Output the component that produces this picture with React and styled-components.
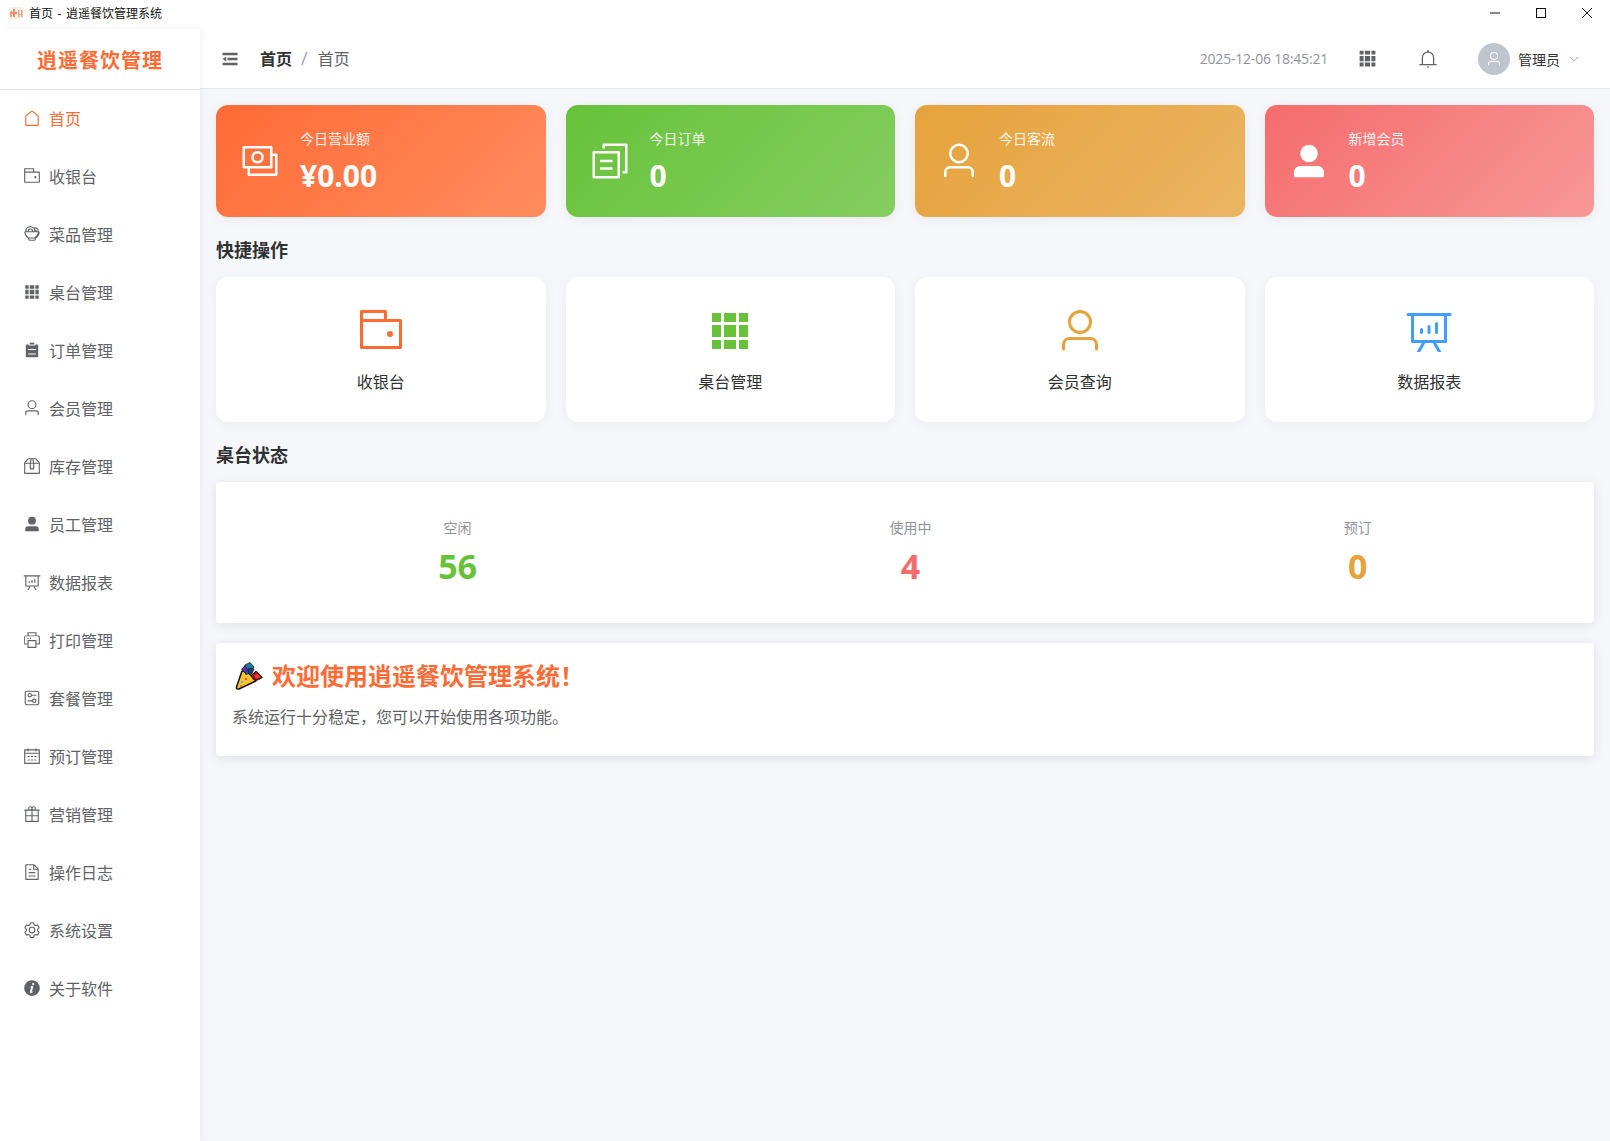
import React from "react";
import styled, { createGlobalStyle } from "styled-components";

const icons = {
  house:
    "M192 413.952V896h640V413.952L512 147.328zM139.52 374.4l352-293.312a32 32 0 0 1 40.96 0l352 293.312A32 32 0 0 1 896 398.976V928a32 32 0 0 1-32 32H160a32 32 0 0 1-32-32V398.976a32 32 0 0 1 11.52-24.576",
  wallet:
    "M640 288h-64V128H128v704h384v32a32 32 0 0 0 32 32H96a32 32 0 0 1-32-32V96a32 32 0 0 1 32-32h512a32 32 0 0 1 32 32z M128 320v512h768V320zm-32-64h832a32 32 0 0 1 32 32v576a32 32 0 0 1-32 32H96a32 32 0 0 1-32-32V288a32 32 0 0 1 32-32 M704 640a64 64 0 1 1 0-128 64 64 0 0 1 0 128",
  food:
    "M128 352.576V352a288 288 0 0 1 491.072-204.224 192 192 0 0 1 274.24 204.48 64 64 0 0 1 57.216 74.24C921.6 600.512 850.048 710.656 736 756.992V800a96 96 0 0 1-96 96H384a96 96 0 0 1-96-96v-43.008c-114.048-46.336-185.6-156.48-214.528-330.496A64 64 0 0 1 128 352.64zm64-.576h64a160 160 0 0 1 320 0h64a224 224 0 0 0-448 0m128 0h192a96 96 0 0 0-192 0m439.424 0h68.544A128.256 128.256 0 0 0 704 192c-15.36 0-29.952 2.688-43.456 7.616 11.328 18.176 20.672 37.76 27.84 58.304A64.128 64.128 0 0 1 759.424 352M672 768H352v32a32 32 0 0 0 32 32h256a32 32 0 0 0 32-32zm-32-64c111-38 179-133 206-288H138c27 155 95 250 206 288z",
  grid:
    "M640 384v256H384V384zm64 0h192v256H704zm-64 512H384V704h256zm64 0V704h192v192zm-64-768v192H384V128zm64 0h192v192H704zM320 384v256H128V384zm0 512H128V704h192zm0-768v192H128V128z",
  list: "M704 192h160v736H160V192h160v64h384zM288 512h448v-64H288zm0 256h448v-64H288zm96-576V96h256v96z",
  user:
    "M512 512a192 192 0 1 0 0-384 192 192 0 0 0 0 384m0 64a256 256 0 1 1 0-512 256 256 0 0 1 0 512m320 320v-96a96 96 0 0 0-96-96H288a96 96 0 0 0-96 96v96a32 32 0 1 1-64 0v-96a160 160 0 0 1 160-160h448a160 160 0 0 1 160 160v96a32 32 0 1 1-64 0",
  box:
    "M317.056 128 128 344.064V896h768V344.064L706.944 128zm-14.528-64h418.944a32 32 0 0 1 24.064 10.88l206.528 236.096A32 32 0 0 1 960 332.032V928a32 32 0 0 1-32 32H96a32 32 0 0 1-32-32V332.032a32 32 0 0 1 7.936-21.12L278.4 75.008A32 32 0 0 1 302.528 64z M64 320h896v64H64z M448 327.872V640h128V327.872L526.08 128h-28.16zM448 64h128l64 256v352a32 32 0 0 1-32 32H416a32 32 0 0 1-32-32V320z",
  userFilled:
    "M288 320a224 224 0 1 0 448 0 224 224 0 1 0-448 0m544 608H160a32 32 0 0 1-32-32v-96a160 160 0 0 1 160-160h448a160 160 0 0 1 160 160v96a32 32 0 0 1-32 32z",
  chart:
    "m665.216 768 110.848 192h-73.856L591.36 768H433.024L322.176 960H248.32l110.848-192H160a32 32 0 0 1-32-32V192H64a32 32 0 0 1 0-64h896a32 32 0 1 1 0 64h-64v544a32 32 0 0 1-32 32zM832 192H192v512h640zM352 448a32 32 0 0 1 32 32v64a32 32 0 0 1-64 0v-64a32 32 0 0 1 32-32m160-64a32 32 0 0 1 32 32v128a32 32 0 0 1-64 0V416a32 32 0 0 1 32-32m160-64a32 32 0 0 1 32 32v192a32 32 0 1 1-64 0V352a32 32 0 0 1 32-32",
  printer:
    "M256 768H105.024c-14.272 0-19.456-1.472-24.64-4.288a29.056 29.056 0 0 1-12.16-12.096C65.536 746.432 64 741.248 64 727.04V379.072c0-42.816 4.48-58.304 12.8-73.984 8.384-15.616 20.672-27.904 36.288-36.288 15.68-8.32 31.168-12.8 73.984-12.8H256V64h512v192h68.928c42.816 0 58.304 4.48 73.984 12.8 15.616 8.384 27.904 20.672 36.288 36.288 8.32 15.68 12.8 31.168 12.8 73.984v347.904c0 14.272-1.472 19.456-4.288 24.64a29.056 29.056 0 0 1-12.096 12.16c-5.184 2.752-10.368 4.224-24.64 4.224H768v192H256zm64-192v320h384V576zm-64 128V512h512v192h128V379.072c0-32.896-2.56-43.84-8.704-55.36a27.456 27.456 0 0 0-12.096-12.032c-11.52-6.08-22.464-8.64-55.36-8.64H187.072c-32.896 0-43.84 2.56-55.36 8.704a27.456 27.456 0 0 0-12.032 12.096c-6.08 11.52-8.64 22.4-8.64 55.296V704zm64-448h384V128H320zm-64 128h64v64h-64zm128 0h64v64h-64z",
  setUp:
    "M224 160a64 64 0 0 0-64 64v576a64 64 0 0 0 64 64h576a64 64 0 0 0 64-64V224a64 64 0 0 0-64-64zm0-64h576a128 128 0 0 1 128 128v576a128 128 0 0 1-128 128H224A128 128 0 0 1 96 800V224A128 128 0 0 1 224 96 M384 416a64 64 0 1 0 0-128 64 64 0 0 0 0 128m0 64a128 128 0 1 1 0-256 128 128 0 0 1 0 256 M480 320h256q32 0 32 32t-32 32H480q-32 0-32-32t32-32m160 416a64 64 0 1 0 0-128 64 64 0 0 0 0 128m0 64a128 128 0 1 1 0-256 128 128 0 0 1 0 256 M288 640h256q32 0 32 32t-32 32H288q-32 0-32-32t32-32",
  calendar:
    "M128 384v512h768V192H768v32a32 32 0 1 1-64 0v-32H320v32a32 32 0 0 1-64 0v-32H128v128h768v64zm192-256h384V96a32 32 0 1 1 64 0v32h160a32 32 0 0 1 32 32v768a32 32 0 0 1-32 32H96a32 32 0 0 1-32-32V160a32 32 0 0 1 32-32h160V96a32 32 0 0 1 64 0zm-32 384h64a32 32 0 0 1 0 64h-64a32 32 0 0 1 0-64m0 192h64a32 32 0 1 1 0 64h-64a32 32 0 1 1 0-64m192-192h64a32 32 0 0 1 0 64h-64a32 32 0 0 1 0-64m0 192h64a32 32 0 1 1 0 64h-64a32 32 0 1 1 0-64m192-192h64a32 32 0 1 1 0 64h-64a32 32 0 1 1 0-64m0 192h64a32 32 0 1 1 0 64h-64a32 32 0 1 1 0-64",
  present:
    "M480 896V640H192v-64h288V320H192v576zm64 0h288V320H544v256h288v64H544zM128 256h768v672a32 32 0 0 1-32 32H160a32 32 0 0 1-32-32z M96 256h832q32 0 32 32t-32 32H96q-32 0-32-32t32-32 M416 256a64 64 0 1 0 0-128 64 64 0 0 0 0 128m0 64a128 128 0 1 1 0-256 128 128 0 0 1 0 256 M608 256a64 64 0 1 0 0-128 64 64 0 0 0 0 128m0 64a128 128 0 1 1 0-256 128 128 0 0 1 0 256",
  document:
    "M832 384H576V128H192v768h640zm-26.496-64L640 154.496V320zM160 64h480l256 256v608a32 32 0 0 1-32 32H160a32 32 0 0 1-32-32V96a32 32 0 0 1 32-32m160 448h384v64H320zm0-192h160v64H320zm0 384h384v64H320z",
  setting:
    "M600.704 64a32 32 0 0 1 30.464 22.208l35.2 109.376c14.784 7.232 28.928 15.36 42.432 24.512l112.384-24.192a32 32 0 0 1 34.432 15.36L944.32 364.8a32 32 0 0 1-4.032 37.504l-77.12 85.12a357.12 357.12 0 0 1 0 49.024l77.12 85.248a32 32 0 0 1 4.032 37.504l-88.704 153.6a32 32 0 0 1-34.432 15.296L708.8 803.904c-13.44 9.088-27.648 17.28-42.368 24.512l-35.264 109.376A32 32 0 0 1 600.704 960H423.296a32 32 0 0 1-30.464-22.208L357.696 828.48a351.616 351.616 0 0 1-42.56-24.64l-112.32 24.256a32 32 0 0 1-34.432-15.36L79.68 659.2a32 32 0 0 1 4.032-37.504l77.12-85.248a357.12 357.12 0 0 1 0-48.896l-77.12-85.248A32 32 0 0 1 79.68 364.8l88.704-153.6a32 32 0 0 1 34.432-15.296l112.32 24.256c13.568-9.152 27.776-17.408 42.56-24.64l35.2-109.312A32 32 0 0 1 423.232 64H600.64zm-23.424 64H446.72l-36.352 113.088-24.512 11.968a294.113 294.113 0 0 0-34.816 20.096l-22.656 15.36-116.224-25.088-65.28 113.152 79.68 88.192-1.92 27.136a293.12 293.12 0 0 0 0 40.192l1.92 27.136-79.808 88.192 65.344 113.152 116.224-25.024 22.656 15.296a294.113 294.113 0 0 0 34.816 20.096l24.512 11.968L446.72 896h130.688l36.48-113.152 24.448-11.904a288.282 288.282 0 0 0 34.752-20.096l22.592-15.296 116.288 25.024 65.28-113.152-79.744-88.192 1.92-27.136a293.12 293.12 0 0 0 0-40.256l-1.92-27.136 79.808-88.128-65.344-113.152-116.288 24.96-22.592-15.232a287.616 287.616 0 0 0-34.752-20.096l-24.448-11.904L577.344 128zM512 320a192 192 0 1 1 0 384 192 192 0 0 1 0-384m0 64a128 128 0 1 0 0 256 128 128 0 0 0 0-256",
  info:
    "M512 64a448 448 0 1 1 0 896.064A448 448 0 0 1 512 64m67.2 275.072c33.28 0 60.288-23.104 60.288-57.344s-27.072-57.344-60.288-57.344c-33.28 0-60.16 23.104-60.16 57.344s26.88 57.344 60.16 57.344M590.912 699.2c0-6.848 2.368-24.64 1.024-34.752l-52.608 60.544c-10.88 11.456-24.512 19.392-30.912 17.28a12.992 12.992 0 0 1-8.256-14.72l87.68-276.992c7.168-35.136-12.544-67.2-54.336-71.296-44.096 0-108.992 44.736-148.48 101.504 0 6.784-1.28 23.68.064 33.792l52.544-60.608c10.88-11.328 23.552-19.328 29.952-17.152a12.8 12.8 0 0 1 7.808 16.128L388.48 728.576c-10.048 32.256 8.96 63.872 55.04 71.04 67.84 0 107.904-43.648 147.456-100.416z",
  fold: "M896 192H128v128h768zm0 256H384v128h512zm0 256H128v128h768zM320 384 128 512l192 128z",
  bell:
    "M512 64a64 64 0 0 1 64 64v64H448v-64a64 64 0 0 1 64-64 M256 768h512V448a256 256 0 1 0-512 0zm256-640a320 320 0 0 1 320 320v384H192V448a320 320 0 0 1 320-320 M96 768h832q32 0 32 32t-32 32H96q-32 0-32-32t32-32m352 128h128a64 64 0 0 1-128 0",
  arrowDown:
    "M831.872 340.864 512 652.672 192.128 340.864a30.592 30.592 0 0 0-42.752 0 29.12 29.12 0 0 0 0 41.6L489.664 714.24a32 32 0 0 0 44.672 0l340.288-331.712a29.12 29.12 0 0 0 0-41.728 30.592 30.592 0 0 0-42.752 0z",
  money:
    "M256 640v192h640V384H768v-64h150.976c14.272 0 19.456 1.472 24.64 4.288a29.056 29.056 0 0 1 12.16 12.096c2.752 5.184 4.224 10.368 4.224 24.64v493.952c0 14.272-1.472 19.456-4.288 24.64a29.056 29.056 0 0 1-12.096 12.16c-5.184 2.752-10.368 4.224-24.64 4.224H233.024c-14.272 0-19.456-1.472-24.64-4.288a29.056 29.056 0 0 1-12.16-12.096c-2.688-5.184-4.224-10.368-4.224-24.576V640z M768 192H128v448h640zm64-22.976v493.952c0 14.272-1.472 19.456-4.288 24.64a29.056 29.056 0 0 1-12.096 12.16c-5.184 2.752-10.368 4.224-24.64 4.224H105.024c-14.272 0-19.456-1.472-24.64-4.288a29.056 29.056 0 0 1-12.16-12.096C65.536 682.432 64 677.248 64 663.04V169.024c0-14.272 1.472-19.456 4.288-24.64a29.056 29.056 0 0 1 12.096-12.16C85.568 129.536 90.752 128 104.96 128h685.952c14.272 0 19.456 1.472 24.64 4.288a29.056 29.056 0 0 1 12.16 12.096c2.752 5.184 4.224 10.368 4.224 24.64z M448 576a160 160 0 1 1 0-320 160 160 0 0 1 0 320m0-64a96 96 0 1 0 0-192 96 96 0 0 0 0 192",
  copy:
    "M128 320v576h576V320zm-32-64h640a32 32 0 0 1 32 32v640a32 32 0 0 1-32 32H96a32 32 0 0 1-32-32V288a32 32 0 0 1 32-32M960 96v704a32 32 0 0 1-32 32h-96v-64h64V128H384v64h-64V96a32 32 0 0 1 32-32h576a32 32 0 0 1 32 32M256 672h320v64H256zm0-192h320v64H256z",
};

const navItems = [
  { icon: "house", label: "首页", active: true },
  { icon: "wallet", label: "收银台" },
  { icon: "food", label: "菜品管理" },
  { icon: "grid", label: "桌台管理" },
  { icon: "list", label: "订单管理" },
  { icon: "user", label: "会员管理" },
  { icon: "box", label: "库存管理" },
  { icon: "userFilled", label: "员工管理" },
  { icon: "chart", label: "数据报表" },
  { icon: "printer", label: "打印管理" },
  { icon: "setUp", label: "套餐管理" },
  { icon: "calendar", label: "预订管理" },
  { icon: "present", label: "营销管理" },
  { icon: "document", label: "操作日志" },
  { icon: "setting", label: "系统设置" },
  { icon: "info", label: "关于软件" },
];

const stats = [
  { icon: "money", label: "今日营业额", value: "¥0.00", from: "#ff6b35", to: "#ff8c5f" },
  { icon: "copy", label: "今日订单", value: "0", from: "#67c23a", to: "#85ce61" },
  { icon: "user", label: "今日客流", value: "0", from: "#e6a23c", to: "#ebb563" },
  { icon: "userFilled", label: "新增会员", value: "0", from: "#f56c6c", to: "#f89898" },
];

const actions = [
  { icon: "wallet", label: "收银台", color: "#ff6b35" },
  { icon: "grid", label: "桌台管理", color: "#67c23a" },
  { icon: "user", label: "会员查询", color: "#e6a23c" },
  { icon: "chart", label: "数据报表", color: "#409eff" },
];

const tableStates = [
  { label: "空闲", value: 56, color: "#67c23a" },
  { label: "使用中", value: 4, color: "#f56c6c" },
  { label: "预订", value: 0, color: "#e6a23c" },
];

function Icon({ name, size = 18, color = "currentColor" }) {
  return (
    <IconSvg viewBox="0 0 1024 1024" width={size} height={size} fill={color}>
      <path d={icons[name]} />
    </IconSvg>
  );
}

function PartyPopper() {
  return (
    <PartySvg viewBox="0 0 28 28" width="28" height="28">
      <path d="M7 9 Q14 9 21 19 L4 27 Q1 27.5 1.5 25 Z" fill="#fdc32d" stroke="#111" strokeWidth="1.5" strokeLinejoin="round" />
      <circle cx="7" cy="20" r="1.1" fill="#29b6f6" />
      <circle cx="11" cy="17" r="1" fill="#e53935" />
      <circle cx="6" cy="24" r="0.8" fill="#e53935" />
      <path d="M9 9 L10 3 L15 0.5 L19 5 L15 11 L11 12.5 Z" fill="#17819f" stroke="#111" strokeWidth="0.8" />
      <path d="M6.5 7 L10 4 L13 8 L10 11 Z" fill="#5e35b1" stroke="#111" strokeWidth="0.7" />
      <path d="M14 6 L19 7 L17 12 L13 11 Z" fill="#283593" stroke="#111" strokeWidth="0.6" />
      <path d="M16 14 L21 9 L27.5 15.5 L23 18 L19 18 Z" fill="#a31515" stroke="#111" strokeWidth="0.9" />
      <path d="M19 14 L22 11.5 L25.5 15 L21.5 16.5 Z" fill="#ef3b2d" />
    </PartySvg>
  );
}

function AppIcon() {
  return (
    <FaviconSvg viewBox="0 0 14 12" width="14" height="12">
      <rect x="0" y="0" width="14" height="12" fill="#f3ece3" />
      <rect x="1" y="4" width="2" height="6" fill="#f08a5d" />
      <rect x="4" y="2" width="2" height="8" fill="#e8662f" />
      <rect x="2" y="5" width="6" height="2" fill="#e8662f" />
      <rect x="9" y="3" width="1.5" height="7" fill="#c98f6f" />
      <rect x="12" y="3" width="1.5" height="7" fill="#c98f6f" />
      <rect x="9" y="7" width="5" height="1" fill="#f08a5d" />
    </FaviconSvg>
  );
}

export default function App() {
  return (
    <Page>
      <GlobalStyle />
      <TitleBar>
        <AppIcon />
        <WindowTitle>首页 - 逍遥餐饮管理系统</WindowTitle>
        <WindowControls>
          <WindowButton>
            <svg viewBox="0 0 12 12" width="12" height="12">
              <path d="M1 6h10" stroke="#111" strokeWidth="1" />
            </svg>
          </WindowButton>
          <WindowButton>
            <svg viewBox="0 0 12 12" width="12" height="12">
              <rect x="1.5" y="1.5" width="9" height="9" fill="none" stroke="#111" strokeWidth="1" />
            </svg>
          </WindowButton>
          <WindowButton>
            <svg viewBox="0 0 12 12" width="12" height="12">
              <path d="M1 1l10 10M11 1L1 11" stroke="#111" strokeWidth="1" />
            </svg>
          </WindowButton>
        </WindowControls>
      </TitleBar>

      <Body>
        <Sidebar>
          <Logo>逍遥餐饮管理</Logo>
          <Nav>
            {navItems.map((item) => (
              <NavItem key={item.label} $active={item.active}>
                <Icon name={item.icon} size={18} />
                <span>{item.label}</span>
              </NavItem>
            ))}
          </Nav>
        </Sidebar>

        <Main>
          <Header>
            <Icon name="fold" size={20} color="#606266" />
            <Breadcrumb>
              <strong>首页</strong>
              <Slash>/</Slash>
              <span>首页</span>
            </Breadcrumb>
            <HeaderRight>
              <DateText>2025-12-06 18:45:21</DateText>
              <HeaderIcon>
                <Icon name="grid" size={21} color="#606266" />
              </HeaderIcon>
              <HeaderIcon>
                <Icon name="bell" size={20} color="#606266" />
              </HeaderIcon>
              <UserBox>
                <Avatar>
                  <Icon name="user" size={16} color="#fff" />
                </Avatar>
                <UserName>管理员</UserName>
                <Icon name="arrowDown" size={12} color="#909399" />
              </UserBox>
            </HeaderRight>
          </Header>

          <Content>
            <CardGrid>
              {stats.map((s) => (
                <StatCard key={s.label} $from={s.from} $to={s.to}>
                  <Icon name={s.icon} size={40} color="#fff" />
                  <StatText>
                    <StatLabel>{s.label}</StatLabel>
                    <StatValue>{s.value}</StatValue>
                  </StatText>
                </StatCard>
              ))}
            </CardGrid>

            <SectionTitle>快捷操作</SectionTitle>
            <CardGrid>
              {actions.map((a) => (
                <ActionCard key={a.label}>
                  <Icon name={a.icon} size={48} color={a.color} />
                  <ActionLabel>{a.label}</ActionLabel>
                </ActionCard>
              ))}
            </CardGrid>

            <SectionTitle>桌台状态</SectionTitle>
            <StatusCard>
              {tableStates.map((t) => (
                <StatusItem key={t.label}>
                  <StatusLabel>{t.label}</StatusLabel>
                  <StatusValue $color={t.color}>{t.value}</StatusValue>
                </StatusItem>
              ))}
            </StatusCard>

            <WelcomeCard>
              <WelcomeTitle>
                <PartyPopper />
                欢迎使用逍遥餐饮管理系统！
              </WelcomeTitle>
              <WelcomeText>系统运行十分稳定，您可以开始使用各项功能。</WelcomeText>
            </WelcomeCard>
          </Content>
        </Main>
      </Body>
    </Page>
  );
}

const GlobalStyle = createGlobalStyle`
  html, body {
    margin: 0;
    padding: 0;
    background: #f5f7fa;
  }
  body {
    font-family: "Open Sans", "Noto Sans CJK SC", sans-serif;
  }
  * {
    box-sizing: border-box;
  }
`;

const Page = styled.div`
  display: flex;
  flex-direction: column;
  width: 100%;
  height: 1141px;
  overflow: hidden;
`;

const IconSvg = styled.svg`
  display: block;
  flex-shrink: 0;
`;

const PartySvg = styled.svg`
  display: block;
  flex-shrink: 0;
`;

const FaviconSvg = styled.svg`
  display: block;
  flex-shrink: 0;
  margin-left: 9px;
  opacity: 0.75;
`;

const TitleBar = styled.div`
  display: flex;
  align-items: center;
  height: 29px;
  padding-bottom: 3px;
  background: #fff;
`;

const WindowTitle = styled.span`
  margin-left: 6px;
  font-size: 12px;
  word-spacing: 1.5px;
  color: #111;
`;

const WindowControls = styled.div`
  display: flex;
  margin-left: auto;
`;

const WindowButton = styled.div`
  display: flex;
  align-items: center;
  justify-content: center;
  width: 46px;
  height: 26px;
`;

const Body = styled.div`
  display: flex;
  flex: 1;
  min-height: 0;
`;

const Sidebar = styled.aside`
  position: relative;
  z-index: 1;
  width: 200px;
  flex-shrink: 0;
  background: #fff;
  box-shadow: 2px 0 8px rgba(0, 0, 0, 0.05);
`;

const Logo = styled.div`
  display: flex;
  align-items: center;
  justify-content: center;
  height: 61px;
  border-bottom: 1px solid #e6e8ee;
  font-size: 20px;
  font-weight: 700;
  letter-spacing: 1px;
  color: #ff6b35;
`;

const Nav = styled.nav`
  padding-top: 3px;
`;

const NavItem = styled.div`
  display: flex;
  align-items: center;
  gap: 8px;
  height: 50px;
  margin-bottom: 8px;
  padding-left: 23px;
  font-size: 16px;
  color: ${({ $active }) => ($active ? "#ff6b35" : "#606266")};
`;

const Main = styled.div`
  display: flex;
  flex-direction: column;
  flex: 1;
  min-width: 0;
`;

const Header = styled.header`
  display: flex;
  align-items: center;
  height: 60px;
  padding: 0 30px 0 20px;
  background: #fff;
  border-bottom: 1px solid #e6e8ee;
`;

const Breadcrumb = styled.div`
  display: flex;
  align-items: center;
  margin: -2px 0 0 20px;
  font-size: 16px;
  color: #606266;

  strong {
    font-weight: 700;
    color: #303133;
  }
`;

const Slash = styled.span`
  margin: 0 10px 0 9px;
  font-size: 18px;
  color: #a0a4ad;
`;

const HeaderRight = styled.div`
  display: flex;
  align-items: center;
  margin-left: auto;
`;

const DateText = styled.span`
  margin-right: 29px;
  font-size: 14px;
  letter-spacing: -0.2px;
  color: #909399;
`;

const HeaderIcon = styled.div`
  margin-right: 40px;
`;

const UserBox = styled.div`
  display: flex;
  align-items: center;
`;

const Avatar = styled.div`
  display: flex;
  align-items: center;
  justify-content: center;
  width: 32px;
  height: 32px;
  border-radius: 50%;
  background: #c0c4cc;
`;

const UserName = styled.span`
  margin: 0 8px 0 8px;
  font-size: 14px;
  color: #303133;
`;

const Content = styled.main`
  display: flex;
  flex-direction: column;
  flex: 1;
  padding: 16px;
  background: #f5f7fa;
`;

const CardGrid = styled.div`
  display: grid;
  grid-template-columns: repeat(4, 1fr);
  gap: 20px;
`;

const StatCard = styled.div`
  display: flex;
  align-items: center;
  gap: 20px;
  height: 112px;
  padding: 0 24px;
  border-radius: 12px;
  color: #fff;
  background: linear-gradient(135deg, ${({ $from }) => $from}, ${({ $to }) => $to});
  box-shadow: 0 2px 12px rgba(0, 0, 0, 0.06);
`;

const StatText = styled.div`
  display: flex;
  flex-direction: column;
`;

const StatLabel = styled.div`
  font-size: 14px;
  line-height: 20px;
  opacity: 0.9;
`;

const StatValue = styled.div`
  margin-top: 9px;
  font-size: 30px;
  line-height: 36px;
  font-weight: 700;
`;

const SectionTitle = styled.h3`
  margin: 21px 0 14px;
  font-size: 18px;
  line-height: 25px;
  font-weight: 700;
  color: #303133;
`;

const ActionCard = styled.div`
  display: flex;
  flex-direction: column;
  align-items: center;
  height: 145px;
  padding-top: 30px;
  border-radius: 12px;
  background: #fff;
  box-shadow: 0 2px 12px rgba(0, 0, 0, 0.05);
`;

const ActionLabel = styled.div`
  margin-top: 15px;
  font-size: 16px;
  line-height: 24px;
  color: #303133;
`;

const StatusCard = styled.div`
  display: flex;
  justify-content: space-around;
  align-items: center;
  height: 141px;
  padding: 0 16px;
  border-radius: 4px;
  background: #fff;
  box-shadow: 0 2px 12px rgba(0, 0, 0, 0.1);
`;

const StatusItem = styled.div`
  padding-bottom: 2px;
  text-align: center;
`;

const StatusLabel = styled.div`
  font-size: 14px;
  line-height: 20px;
  color: #909399;
`;

const StatusValue = styled.div`
  margin-top: 8px;
  font-size: 34px;
  line-height: 40px;
  font-weight: 700;
  color: ${({ $color }) => $color};
`;

const WelcomeCard = styled.div`
  margin-top: 20px;
  height: 113px;
  padding: 19px 16px;
  border-radius: 4px;
  background: #fff;
  box-shadow: 0 2px 12px rgba(0, 0, 0, 0.1);
`;

const WelcomeTitle = styled.h2`
  display: flex;
  align-items: center;
  gap: 9px;
  margin: 0 0 0 3px;
  font-size: 24px;
  line-height: 28px;
  font-weight: 700;
  color: #ff6b35;
`;

const WelcomeText = styled.p`
  margin: 15px 0 0;
  font-size: 16px;
  line-height: 24px;
  color: #606266;
`;
